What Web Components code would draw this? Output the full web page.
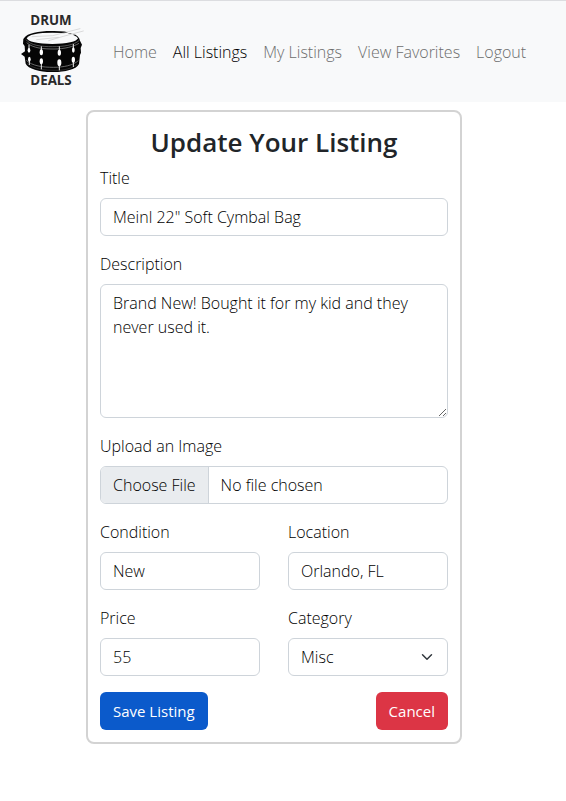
<!DOCTYPE html>
<html lang="en">
<head>
<meta charset="utf-8">
<meta name="viewport" content="width=device-width, initial-scale=1">
<title>Drum Deals - Update Your Listing</title>
<style>
  body { margin: 0; background: #fff; color: #212529; font: 300 16px/24px "Open Sans", "Noto Sans", sans-serif; }
  main { padding: 8px 18px 16px 0; }
</style>
</head>
<body>
<site-nav>
  <nav-link href="#home">Home</nav-link>
  <nav-link href="#listings" active>All Listings</nav-link>
  <nav-link href="#mine">My Listings</nav-link>
  <nav-link href="#favorites">View Favorites</nav-link>
  <nav-link href="#logout">Logout</nav-link>
</site-nav>
<main>
  <listing-card heading="Update Your Listing">
    <form-field label="Title" value='Meinl 22" Soft Cymbal Bag'></form-field>
    <form-field label="Description" kind="textarea" value="Brand New! Bought it for my kid and they never used it."></form-field>
    <form-field label="Upload an Image" kind="file"></form-field>
    <field-pair>
      <form-field label="Condition" value="New"></form-field>
      <form-field label="Location" value="Orlando, FL"></form-field>
    </field-pair>
    <field-pair>
      <form-field label="Price" value="55"></form-field>
      <form-field label="Category" kind="select" value="Misc"></form-field>
    </field-pair>
    <action-button slot="actions" variant="primary">Save Listing</action-button>
    <action-button slot="actions" variant="danger">Cancel</action-button>
  </listing-card>
</main>
<script>
function define(name, render) {
  customElements.define(name, class extends HTMLElement {
    connectedCallback() {
      if (this.shadowRoot) return;
      const root = this.attachShadow({ mode: "open" });
      root.innerHTML = render(this);
      const control = root.querySelector("#control");
      if (control && control.type !== "file") control.value = this.getAttribute("value") || "";
    }
  });
}

define("drum-logo", () => `
  <style>
    :host { display: block; flex: none; }
    svg { display: block; width: 64px; height: 88px; }
    text { font: 700 40px "Open Sans", sans-serif; text-anchor: middle; fill: #2a2a2a; }
  </style>
  <svg viewBox="30 18 192 264" role="img" aria-label="Drum Deals">
    <text x="123" y="76">DRUM</text>
    <path fill="#050505" d="M43 113C52 99 90 92 132 93C178 93 208 103 210 122L216 134L212 144L213 158L210 165L207 192C198 210 160 217 125 216C88 216 54 206 47 191L44 170L33 162L45 154L44 138L39 131L40 117Z"/>
    <ellipse cx="127" cy="115" rx="76" ry="17" fill="#f8f9fa"/>
    <path d="M48 119C62 137 95 140 127 140S192 136 208 121" fill="none" stroke="#777" stroke-width="2"/>
    <path d="M50 128C70 145 100 147 132 147S190 140 207 130" fill="none" stroke="#999" stroke-width="2"/>
    <path d="M49 181C66 198 100 202 130 202S190 196 205 182" fill="none" stroke="#999" stroke-width="2"/>
    <path d="M51 190C72 208 106 211 136 211S182 206 202 193" fill="none" stroke="#777" stroke-width="1"/>
    <g stroke="#eee" stroke-width="3"><path d="M57 134v20M94 139v20M148 139v20M190 132v20M58 181v14M94 188v20M148 189v22M190 183v18"/></g>
    <g fill="#fff"><ellipse cx="57" cy="151" rx="4" ry="7"/><ellipse cx="94" cy="157" rx="5" ry="9"/><ellipse cx="148" cy="158" rx="5" ry="9"/><ellipse cx="190" cy="150" rx="4" ry="8"/><ellipse cx="58" cy="178" rx="4" ry="8"/><ellipse cx="94" cy="184" rx="5" ry="9"/><ellipse cx="148" cy="188" rx="6" ry="10"/><ellipse cx="190" cy="179" rx="5" ry="9"/></g>
    <g fill="none" stroke-linecap="round">
      <path d="M155 105L208 88M156 110L219 94" stroke="#f8f9fa" stroke-width="5"/>
      <path d="M66 110L128 107L210 86M116 122L160 109L220 93M80 119L145 112" stroke="#bbb" stroke-width="1.5"/>
    </g>
    <text x="123" y="255">DEALS</text>
  </svg>`);

define("site-nav", () => `
  <style>
    :host { display: block; border-top: 1px solid #dcdde0; background: #f8f9fa; }
    nav { display: flex; align-items: center; padding: 5px 20px 8px; }
    .links { display: flex; flex-wrap: wrap; padding: 4px 0 0 21px; }
  </style>
  <nav aria-label="Main"><drum-logo></drum-logo><div class="links"><slot></slot></div></nav>`);

define("nav-link", el => `
  <style>
    :host { display: block; }
    a { display: block; padding: 8px; color: #6c6d6d; text-decoration: none; white-space: nowrap; }
    :host([active]) a { color: #000; }
  </style>
  <a href="${el.getAttribute("href")}"${el.hasAttribute("active") ? ' aria-current="page"' : ""}><slot></slot></a>`);

define("listing-card", el => `
  <style>
    :host { display: block; box-sizing: border-box; max-width: 376px; margin: 0 auto; padding: 12px; border: 2px solid #d3d3d3; border-radius: 8px; background: #fff; }
    h1 { margin: 0 0 6px; font-size: 26px; line-height: 36px; font-weight: 600; text-align: center; }
    form { display: flex; flex-direction: column; gap: 16px; }
    .actions { display: flex; justify-content: space-between; }
  </style>
  <h1>${el.getAttribute("heading")}</h1>
  <form><slot></slot><div class="actions"><slot name="actions"></slot></div></form>`);

define("field-pair", () => `
  <style>:host { display: grid; grid-template-columns: 1fr 1fr; gap: 28px; }</style>
  <slot></slot>`);

define("form-field", el => {
  const controls = {
    textarea: '<textarea id="control" rows="5"></textarea>',
    file: '<input id="control" type="file">',
    select: '<select id="control"><option>Misc</option><option>Drums</option><option>Cymbals</option></select>'
  };
  return `
  <style>
    :host { display: block; min-width: 0; }
    label { display: block; margin-bottom: 8px; color: #000; }
    input, textarea, select { display: block; box-sizing: border-box; width: 100%; margin: 0; padding: 6px 12px; border: 1px solid #ced4da; border-radius: 6px; background: #fff; color: #000; font: inherit; appearance: none; }
    input, select { height: 38px; }
    textarea { resize: vertical; height: 134px; }
    input[type=file] { overflow: hidden; }
    input::file-selector-button { margin: -6px 12px -6px -12px; padding: 6px 12px; border: 0 solid #ced4da; border-right-width: 1px; border-radius: 0; background: #e9ecef; color: #000; font: inherit; }
    select { padding-right: 36px; background: #fff url("data:image/svg+xml,%3csvg xmlns='http://www.w3.org/2000/svg' viewBox='0 0 16 16'%3e%3cpath fill='none' stroke='%23343a40' stroke-linecap='round' stroke-linejoin='round' stroke-width='2' d='m2 5 6 6 6-6'/%3e%3c/svg%3e") no-repeat right 14px center / 12px 12px; }
  </style>
  <label for="control">${el.getAttribute("label")}</label>
  ${controls[el.getAttribute("kind")] || '<input id="control" type="text">'}`;
});

define("action-button", () => `
  <style>
    :host { display: block; }
    button { display: block; margin: 0; padding: 7px 13px; border: 0; border-radius: 6px; background: #0b5acb; color: #fff; font: inherit; font-size: 15px; font-weight: 400; cursor: pointer; }
    :host([variant=danger]) button { background: #dc3545; }
  </style>
  <button type="button"><slot></slot></button>`);
</script>
</body>
</html>
